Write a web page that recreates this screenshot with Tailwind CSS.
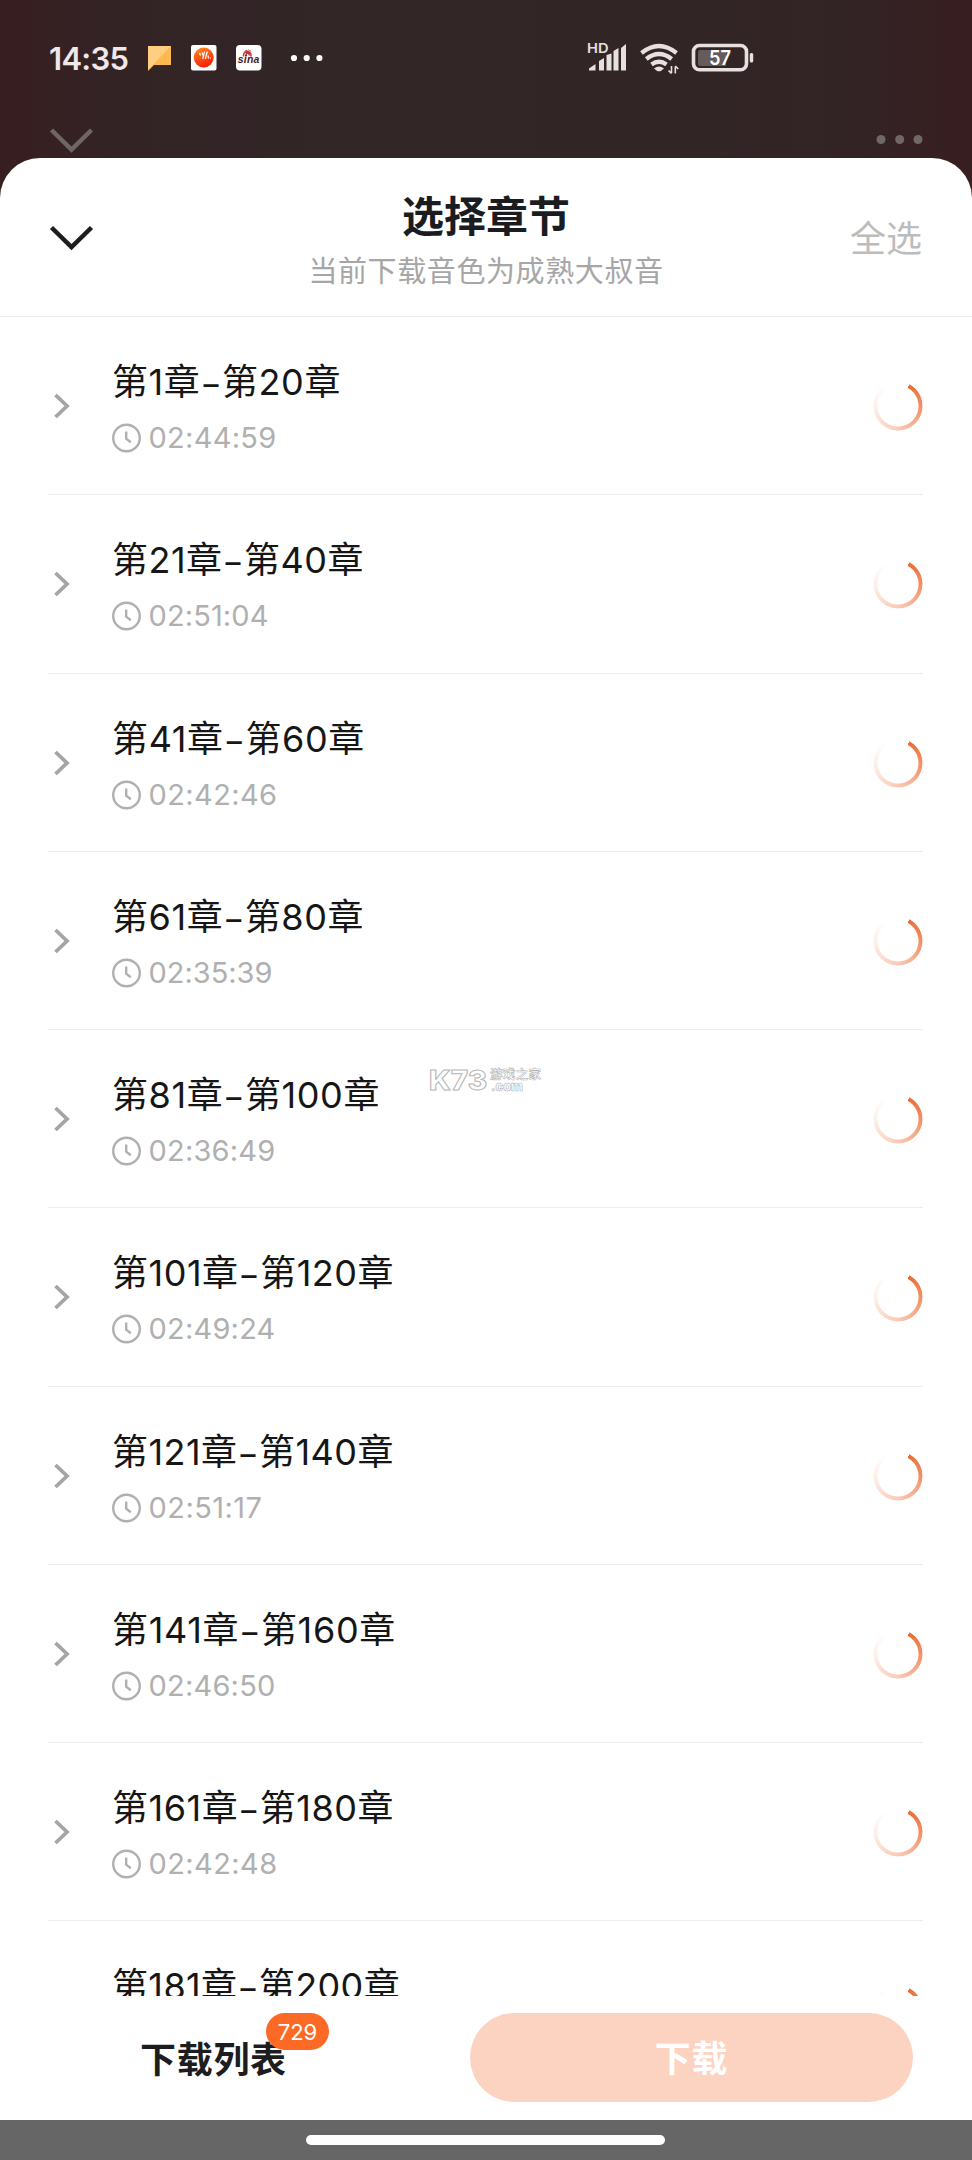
<!DOCTYPE html>
<html lang="zh-CN">
<head>
<meta charset="utf-8">
<title>选择章节</title>
<script src="https://cdn.jsdelivr.net/npm/@tailwindcss/browser@4"></script>
</head>
<body class="bg-white">
<div class="relative flex h-[2160px] w-[972px] flex-col overflow-hidden bg-[linear-gradient(90deg,#381e20_0%,#332325_12%,#322627_35%,#322526_75%,#332325_88%,#381e20_100%)] font-['Inter','Noto_Sans_CJK_SC',sans-serif]">
  <!-- status bar -->
  <div class="flex h-[116px] shrink-0 items-center pl-[49px]">
    <span class="w-[80px] text-[31px] leading-none font-semibold tracking-[-0.700px] whitespace-nowrap text-[#eee8e8]">14:35</span>
    <svg class="ml-[19px] h-[26px] w-[24px]" viewBox="0 0 24 26"><path d="M0 1h23v19H6l-6 6z" fill="#ffb84d"/><path d="M0 1h23L0 25z" fill="#ffce80"/></svg>
    <svg class="ml-[19px] h-[26px] w-[26px]" viewBox="0 0 26 26"><defs><linearGradient id="o" x1="0.2" y1="0" x2="0.6" y2="1"><stop offset="0" stop-color="#ff8a1e"/><stop offset="1" stop-color="#f31a06"/></linearGradient></defs><rect width="25.500" height="25.500" rx="2" fill="#fff"/><circle cx="12.700" cy="12.500" r="10" fill="url(#o)"/><path d="M8.500 8l1 2.500M11 7.500l1.300 3.500M13.500 6.500L11.800 14M16.300 6.500L14.300 14M17.300 10.500v3M19.300 12.500v1" stroke="#fff" stroke-width="1.200" fill="none"/></svg>
    <svg class="ml-[19px] h-[26px] w-[26px]" viewBox="0 0 26 26"><rect width="25.500" height="25.500" rx="4" fill="#fff"/><path d="M7.500 11.500c-1-6.500 8.500-6.500 7.500 0M9.800 11.500c0-4.500 3.500-4.500 3.500-1" stroke="#b8323a" stroke-width="1.500" fill="none"/><path d="M8.500 6.500l1.500-1.200 1.200.7 1.500-1.200.8 1.200 1.500 0" stroke="#d05050" stroke-width="1" fill="none"/><text x="1.800" y="18" font-family="Liberation Sans" font-size="10.500" font-weight="700" font-style="italic" fill="#4a1a18" textLength="21.500">sina</text></svg>
    <svg class="ml-[27px] h-[8px] w-[36px]" viewBox="0 0 36 8" fill="#fff"><circle cx="5" cy="4" r="3.100"/><circle cx="17.700" cy="4" r="3.100"/><circle cx="30.400" cy="4" r="3.100"/></svg>
    <svg class="ml-[261px] h-[32px] w-[42px] overflow-visible" viewBox="586 42 42 32" fill="#e8e0e0"><text x="587" y="53.300" font-family="Inter" font-weight="600" font-size="13.500" textLength="21.500" lengthAdjust="spacingAndGlyphs">HD</text><path d="M589 70.500v-2l6.500-4.500v6.500zM599 70.500v-9.500l5-3v12.500zM606.500 70.500v-15.500l5-1.500v17zM613.500 70.500v-19.500l5-3v22.500zM621 70.500v-22.500l5-4v26.500z"/></svg>
    <svg class="ml-[10px] h-[32px] w-[42px]" viewBox="638 42 42 32" fill="none" stroke="#e8e0e0" stroke-width="4.300"><path d="M641.500 53q17.500-14 35 0M646.300 59q12.700-10 25.400 0M651.500 64.500q7.500-5.500 15 0"/><path d="M654 68.500q5-4 10 0l-3.500 2.700h-3z" fill="#e8e0e0" stroke="none"/><path d="M671.500 66v7M671.500 73.500l-3-3M675.300 73.500v-7M675.300 66l3 3" stroke-width="1.600"/></svg>
    <svg class="ml-[11px] h-[32px] w-[64px]" viewBox="691 42 64 32"><rect x="693.500" y="45.500" width="53" height="24.300" rx="6" fill="none" stroke="#e8e0e0" stroke-width="3.600"/><path d="M700 50h26v16h-26q-2 0-2-2v-12q0-2 2-2" fill="#665a5a"/><rect x="749.800" y="53" width="3.400" height="9.500" rx="1.500" fill="#e8e0e0"/><text x="709" y="65.300" font-family="Inter" font-weight="600" font-size="20.500" textLength="22" lengthAdjust="spacingAndGlyphs" fill="#fff">57</text></svg>
  </div>
  <!-- page toolbar behind the sheet -->
  <div class="flex h-[42px] shrink-0 items-start justify-between pr-[48px] pl-[48px]">
    <svg class="mt-[10px] h-[28px] w-[48px]" viewBox="0 0 48 28" fill="none" stroke="#6f6565" stroke-width="4.500"><path d="M3.500 4L23.500 23.500 43.500 4"/></svg>
    <svg class="mt-[18px] h-[11px] w-[48px]" viewBox="0 0 48 11" fill="#706767"><circle cx="5" cy="5.500" r="4.500"/><circle cx="23.700" cy="5.500" r="4.500"/><circle cx="42" cy="5.500" r="4.500"/></svg>
  </div>
  <!-- sheet -->
  <main class="flex h-[1962px] shrink-0 flex-col overflow-hidden rounded-t-[40px] bg-white">
    <header class="flex h-[159px] shrink-0 items-start justify-between border-b-[1.500px] border-[#e9e9e9] px-[48px]">
      <svg class="mt-[65px] h-[28px] w-[74px]" viewBox="0 0 74 28" fill="none" stroke="#1d1d1f" stroke-width="4.500"><path d="M3.500 4.500L23.500 24 43.500 4.500"/></svg>
      <div class="mt-[34px] flex flex-col items-center">
        <h1 class="text-[42px] leading-[50px] font-bold text-[#1a1c1f]">选择章节</h1>
        <p class="mt-[12px] text-[29px] leading-[36px] tracking-[0.600px] text-[#a6a6a6]">当前下载音色为成熟大叔音</p>
      </div>
      <span class="mt-[60px] w-[74px] text-[36px] leading-[42px] text-[#bcbcbc]">全选</span>
    </header>
    <ul id="list" class="h-[1679px] shrink-0 overflow-hidden pr-[49px] pl-[48px]"></ul>
    <footer class="flex h-[124px] shrink-0 items-start pr-[59px] pl-[140px]">
      <div class="relative mt-[41px] w-[330px]">
        <span class="text-[36px] leading-[46px] font-bold tracking-[0.700px] text-[#1d1d1f]">下载列表</span>
        <span class="absolute -top-[24px] left-[126px] flex h-[37px] w-[63px] items-center justify-center rounded-full bg-[#fd6a26] text-[22px] leading-none text-white">729</span>
      </div>
      <button class="mt-[17px] flex h-[89px] flex-1 items-center justify-center rounded-full bg-[#fcd2c0] pt-[2px] text-[36px] font-bold tracking-[0.700px] text-white">下载</button>
    </footer>
  </main>
  <!-- gesture bar -->
  <div class="flex h-[40px] shrink-0 justify-center bg-[#666666] pt-[15px] pr-[1px]"><div class="h-[10px] w-[359px] rounded-full bg-white"></div></div>
  <!-- watermark -->
  <svg class="absolute top-[1062px] left-[426px] h-[36px] w-[120px]" viewBox="426 1062 120 36" fill="#fff" stroke="#b5b5b5"><text x="429" y="1090" font-family="Inter" font-weight="800" font-size="27" stroke-width="1" textLength="58" lengthAdjust="spacingAndGlyphs">K73</text><text x="490" y="1079" font-family="Noto Sans CJK SC" font-weight="700" font-size="12.500" stroke-width="0.600" textLength="51">游戏之家</text><text x="491" y="1091" font-family="Inter" font-weight="800" font-size="13.500" stroke-width="0.700" textLength="32" lengthAdjust="spacingAndGlyphs">.com</text></svg>
</div>
<template id="row">
  <li class="flex h-[178.250px] items-start border-b-[1.500px] border-[#ececec]">
    <svg class="mt-[75px] ml-[4px] h-[28px] w-[20px]" viewBox="0 0 20 28" fill="none" stroke="#a5a5a5" stroke-width="3.800"><path d="M3.500 3L15 14 3.500 25"/></svg>
    <div class="ml-[40px] flex flex-1 flex-col items-start">
      <span data-t class="mt-[42px] h-[46px] text-[36px] leading-[46px] whitespace-nowrap text-[#161616]"><span></span><span class="mx-[3px] text-[30px] leading-none font-medium">–</span><span></span></span>
      <div class="mt-[15px] flex h-[36px] items-center">
        <svg class="h-[30px] w-[30px]" viewBox="0 0 30 30" fill="none" stroke="#b0b0b0" stroke-width="2.400"><circle cx="14.500" cy="15" r="13.300"/><path d="M14.200 8.500v7.200l4.600 3.600"/></svg>
        <span data-d class="ml-[6.500px] text-[29px] leading-[36px] whitespace-nowrap text-[#b0b0b0]"></span>
      </div>
    </div>
    <div class="mt-[64px] h-[50px] w-[50px] rounded-full bg-[conic-gradient(from_28deg,#ea6c36_0deg,#f2956c_70deg,#f9c9b4_150deg,#fdece4_230deg,#ffffff_300deg,#ffffff_360deg)] [mask-image:radial-gradient(circle,transparent_20px,black_21px,black_24px,transparent_25px)]"></div>
  </li>
</template>
<script>
// first and last chapter, duration, label width and duration width in px
const rows = [
  ['第1章', '第20章', '02:44:59', 229, 128], ['第21章', '第40章', '02:51:04', 252, 120],
  ['第41章', '第60章', '02:42:46', 253, 129], ['第61章', '第80章', '02:35:39', 252, 124],
  ['第81章', '第100章', '02:36:49', 268, 127], ['第101章', '第120章', '02:49:24', 282, 127],
  ['第121章', '第140章', '02:51:17', 282, 114], ['第141章', '第160章', '02:46:50', 284, 127],
  ['第161章', '第180章', '02:42:48', 282, 129], ['第181章', '第200章', '02:40:12', 288, 127]
];
const list = document.getElementById('list'), tpl = document.getElementById('row');
const pending = [];
for (const [from, to, time, lw, tw] of rows) {
  const li = tpl.content.cloneNode(true);
  const a = li.querySelector('[data-t]'), b = li.querySelector('[data-d]');
  a.children[0].textContent = from;
  a.children[2].textContent = to;
  b.textContent = time;
  list.appendChild(li);
  pending.push([a, lw], [b, tw]);
}
function fitAll() {
  for (const [el, width] of pending) {
    el.style.letterSpacing = '0px';
    const extra = (width - el.getBoundingClientRect().width) / el.textContent.length;
    el.style.letterSpacing = extra.toFixed(3) + 'px';
  }
}
fitAll();
window.addEventListener('load', fitAll);
document.fonts.ready.then(fitAll);
</script>
</body>
</html>
